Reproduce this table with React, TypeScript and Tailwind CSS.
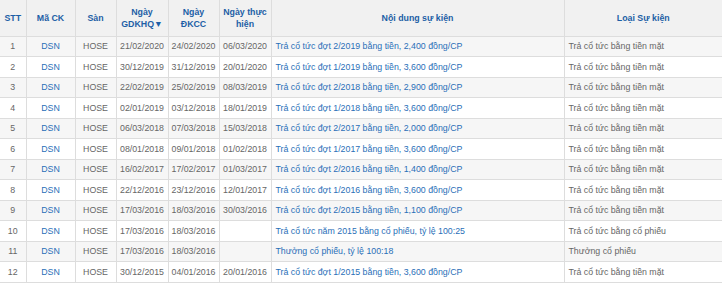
const rows = [
  ["1", "21/02/2020", "24/02/2020", "06/03/2020", "Trả cổ tức đợt 2/2019 bằng tiền, 2,400 đồng/CP", "Trả cổ tức bằng tiền mặt"],
  ["2", "30/12/2019", "31/12/2019", "20/01/2020", "Trả cổ tức đợt 1/2019 bằng tiền, 3,600 đồng/CP", "Trả cổ tức bằng tiền mặt"],
  ["3", "22/02/2019", "25/02/2019", "08/03/2019", "Trả cổ tức đợt 2/2018 bằng tiền, 2,900 đồng/CP", "Trả cổ tức bằng tiền mặt"],
  ["4", "02/01/2019", "03/12/2018", "18/01/2019", "Trả cổ tức đợt 1/2018 bằng tiền, 3,600 đồng/CP", "Trả cổ tức bằng tiền mặt"],
  ["5", "06/03/2018", "07/03/2018", "15/03/2018", "Trả cổ tức đợt 2/2017 bằng tiền, 2,000 đồng/CP", "Trả cổ tức bằng tiền mặt"],
  ["6", "08/01/2018", "09/01/2018", "01/02/2018", "Trả cổ tức đợt 1/2017 bằng tiền, 3,600 đồng/CP", "Trả cổ tức bằng tiền mặt"],
  ["7", "16/02/2017", "17/02/2017", "01/03/2017", "Trả cổ tức đợt 2/2016 bằng tiền, 1,400 đồng/CP", "Trả cổ tức bằng tiền mặt"],
  ["8", "22/12/2016", "23/12/2016", "12/01/2017", "Trả cổ tức đợt 1/2016 bằng tiền, 3,600 đồng/CP", "Trả cổ tức bằng tiền mặt"],
  ["9", "17/03/2016", "18/03/2016", "30/03/2016", "Trả cổ tức đợt 2/2015 bằng tiền, 1,100 đồng/CP", "Trả cổ tức bằng tiền mặt"],
  ["10", "17/03/2016", "18/03/2016", "", "Trả cổ tức năm 2015 bằng cổ phiếu, tỷ lệ 100:25", "Trả cổ tức bằng cổ phiếu"],
  ["11", "17/03/2016", "18/03/2016", "", "Thưởng cổ phiếu, tỷ lệ 100:18", "Thưởng cổ phiếu"],
  ["12", "30/12/2015", "04/01/2016", "20/01/2016", "Trả cổ tức đợt 1/2015 bằng tiền, 3,600 đồng/CP", "Trả cổ tức bằng tiền mặt"],
];

export default function App() {
  return (
    <div className="w-[722px] h-[283px] overflow-hidden bg-white font-['Liberation_Sans',Arial,sans-serif] text-[8.8px]">
      <table className="w-[722px] table-fixed border-collapse">
        <colgroup>
          <col className="w-[26px]" />
          <col className="w-[49px]" />
          <col className="w-[41px]" />
          <col className="w-[52px]" />
          <col className="w-[51px]" />
          <col className="w-[52px]" />
          <col className="w-[293px]" />
          <col className="w-[158px]" />
        </colgroup>
        <thead>
          <tr className="h-[36px] bg-[#f1f1f1] text-[#1d5fa6] font-bold leading-[12px]">
            <th className="border border-[#dddddd] border-t-0 border-l-0 p-0">STT</th>
            <th className="border border-[#dddddd] border-t-0 p-0">Mã CK</th>
            <th className="border border-[#dddddd] border-t-0 p-0">Sàn</th>
            <th className="border border-[#dddddd] border-t-0 p-0">Ngày<br />GDKHQ▼</th>
            <th className="border border-[#dddddd] border-t-0 p-0">Ngày<br />ĐKCC</th>
            <th className="border border-[#dddddd] border-t-0 p-0">Ngày thực<br />hiện</th>
            <th className="border border-[#dddddd] border-t-0 p-0">Nội dung sự kiện</th>
            <th className="border border-[#dddddd] border-t-0 border-r-0 p-0">Loại Sự kiện</th>
          </tr>
        </thead>
        <tbody className="leading-[12px]">
          {rows.map((r, i) => (
            <tr key={r[0]} className={`h-[20.5px] ${i % 2 === 0 ? "bg-[#f6f6f6]" : "bg-white"}`}>
              <td className="border border-[#dddddd] border-l-0 p-0 text-center text-[#666666]">{r[0]}</td>
              <td className="border border-[#dddddd] p-0 text-center text-[#2a6fb8]">DSN</td>
              <td className="border border-[#dddddd] p-0 text-center text-[#666666]">HOSE</td>
              <td className="border border-[#dddddd] p-0 text-center text-[#666666]">{r[1]}</td>
              <td className="border border-[#dddddd] p-0 text-center text-[#666666]">{r[2]}</td>
              <td className="border border-[#dddddd] p-0 text-center text-[#666666]">{r[3]}</td>
              <td className="border border-[#dddddd] p-0 pl-[4px] text-[#2a6fb8] whitespace-nowrap">{r[4]}</td>
              <td className="border border-[#dddddd] border-r-0 p-0 pl-[4px] text-[#666666] whitespace-nowrap">{r[5]}</td>
            </tr>
          ))}
        </tbody>
      </table>
    </div>
  );
}
